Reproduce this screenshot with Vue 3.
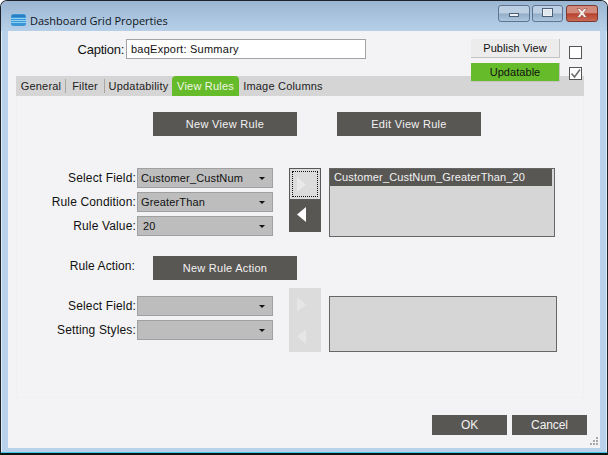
<script setup>
const tabs = [
  { name: "General", width: 48 },
  { name: "Filter", width: 38 },
  { name: "Updatability", width: 67 },
  { name: "View Rules", width: 67, active: true },
  { name: "Image Columns", width: 88 },
];
const ruleFields = [
  { label: "Select Field:", value: "Customer_CustNum" },
  { label: "Rule Condition:", value: "GreaterThan" },
  { label: "Rule Value:", value: "20", indent: true },
];
const actionFields = [
  { label: "Select Field:", value: "" },
  { label: "Setting Styles:", value: "" },
];
</script>

<template>
  <div class="window">
    <div class="titlebar">
      <svg class="app-icon" width="15" height="12" viewBox="0 0 15 12">
        <rect x="0" y="0" width="15" height="12" rx="2.5" fill="#3b96d6" />
        <rect x="1" y="1" width="13" height="2" fill="#2a7fc4" />
        <rect x="0" y="4" width="15" height="1" fill="#8fd2f3" />
        <rect x="0" y="6" width="15" height="1" fill="#8fd2f3" />
        <rect x="0" y="8" width="15" height="1" fill="#8fd2f3" />
      </svg>
      <span class="title">Dashboard Grid Properties</span>
      <div class="win-buttons">
        <div class="win-btn"><span class="min-glyph"></span></div>
        <div class="win-btn narrow"><span class="max-glyph"></span></div>
        <div class="win-btn close">
          <svg width="14" height="10" viewBox="0 0 14 10">
            <path d="M2 0.5h3l2 2.5 2-2.5h3L8.8 5 12 9.5H9L7 7 5 9.5H2L5.2 5z" fill="#f4ece8" stroke="#8a4a3c" stroke-width="0.6" />
          </svg>
        </div>
      </div>
    </div>

    <div class="client">
      <div class="header">
        <div class="caption-row">
          <label class="caption-label">Caption:</label>
          <div class="caption-input">baqExport: Summary</div>
        </div>
        <div class="publish">
          <div class="publish-row">
            <div class="publish-btn">Publish View</div>
            <span class="check"></span>
          </div>
          <div class="publish-row">
            <div class="publish-btn green">Updatable</div>
            <span class="check">
              <svg width="13" height="13" viewBox="0 0 13 13">
                <path d="M2.5 6.5l3 3.5 5.5-7.5" fill="none" stroke="#6a6a6a" stroke-width="1.5" />
              </svg>
            </span>
          </div>
        </div>
      </div>

      <div class="tabs">
        <template v-for="(tab, i) in tabs" :key="tab.name">
          <div class="tab" :class="{ active: tab.active }" :style="{ width: tab.width + 'px' }">{{ tab.name }}</div>
          <span v-if="i < 2" class="tab-sep"></span>
        </template>
      </div>

      <div class="panel">
        <div class="top-buttons">
          <div class="dark-btn">New View Rule</div>
          <div class="dark-btn">Edit View Rule</div>
        </div>

        <div class="rule-block">
          <div class="fields">
            <div v-for="f in ruleFields" :key="f.label" class="field">
              <span class="field-label">{{ f.label }}</span>
              <div class="select" :class="{ indent: f.indent }">
                <span>{{ f.value }}</span><i class="caret"></i>
              </div>
            </div>
          </div>
          <div class="arrows">
            <div class="arrow light">
              <span class="focus"></span>
              <svg width="9" height="15" viewBox="0 0 9 15"><path d="M0 0l9 7.5L0 15z" fill="#e9e9e9" /></svg>
            </div>
            <div class="arrow dark">
              <svg width="9" height="15" viewBox="0 0 9 15"><path d="M9 0L0 7.5 9 15z" fill="#fff" /></svg>
            </div>
          </div>
          <div class="list list-top">
            <div class="list-item">Customer_CustNum_GreaterThan_20</div>
          </div>
        </div>

        <div class="action-row">
          <span class="action-label">Rule Action:</span>
          <div class="dark-btn wide-text">New Rule Action</div>
        </div>

        <div class="rule-block second">
          <div class="fields offset">
            <div v-for="f in actionFields" :key="f.label" class="field">
              <span class="field-label">{{ f.label }}</span>
              <div class="select"><span>{{ f.value }}</span><i class="caret"></i></div>
            </div>
          </div>
          <div class="arrows disabled">
            <div class="arrow">
              <svg width="9" height="15" viewBox="0 0 9 15"><path d="M0 0l9 7.5L0 15z" fill="#e6e6e6" /></svg>
            </div>
            <div class="arrow">
              <svg width="9" height="15" viewBox="0 0 9 15"><path d="M9 0L0 7.5 9 15z" fill="#e6e6e6" /></svg>
            </div>
          </div>
          <div class="list list-bottom"></div>
        </div>
      </div>

      <div class="footer">
        <div class="dark-btn small">OK</div>
        <div class="dark-btn small">Cancel</div>
      </div>
      <svg class="grip" width="9" height="9" viewBox="0 0 9 9" fill="#a9a9a9">
        <rect x="6" y="0" width="2" height="2" />
        <rect x="3" y="3" width="2" height="2" />
        <rect x="6" y="3" width="2" height="2" />
        <rect x="0" y="6" width="2" height="2" />
        <rect x="3" y="6" width="2" height="2" />
        <rect x="6" y="6" width="2" height="2" />
      </svg>
    </div>
  </div>
</template>

<style>
html,
body {
  margin: 0;
  background: #fff;
}
</style>

<style scoped>
.window {
  width: 608px;
  height: 455px;
  box-sizing: border-box;
  padding: 0 1px 1px;
  background: #b9d2ec;
  border: 1px solid #1c2228;
  border-bottom: 2px solid #0f1418;
  border-radius: 7px 7px 0 0;
  box-shadow: inset 0 -1px #46c4e4, inset 1px 0 #e2edf7, inset -1px 0 #e2edf7;
  overflow: hidden;
  display: flex;
  flex-direction: column;
  font-family: "Liberation Sans", Arial, sans-serif;
  font-size: 12px;
  color: #111;
}

.titlebar {
  height: 30px;
  margin: 0 -1px;
  padding: 0 9px 0 10px;
  display: flex;
  align-items: center;
  background: linear-gradient(#9bb6d2, #b7d0e9);
  flex-shrink: 0;
}

.app-icon {
  margin-top: 8px;
  margin-right: 4px;
}

.title {
  font-family: "Open Sans", sans-serif;
  font-size: 11px;
  color: #10151a;
  margin-top: 8px;
}

.win-buttons {
  margin-left: auto;
  margin-top: -6px;
  display: flex;
  gap: 2px;
}

.win-btn {
  width: 32px;
  height: 17px;
  box-sizing: border-box;
  border: 1px solid #5d7590;
  border-radius: 3px;
  display: flex;
  align-items: center;
  justify-content: center;
  background: linear-gradient(#bdd0e3 0 48%, #93adc8 52%, #aec6de);
}

.win-btn.narrow {
  width: 31px;
}

.win-btn.close {
  margin-left: 1px;
  border-color: #7a3a30;
  background: linear-gradient(#d28a7c 0 45%, #b8412e 52%, #c96a56);
}

.min-glyph {
  width: 10px;
  height: 4px;
  margin-top: 4px;
  background: #eef2f6;
  border: 1px solid #4d6075;
  box-sizing: border-box;
}

.max-glyph {
  width: 11px;
  height: 9px;
  box-sizing: border-box;
  margin-top: -2px;
  background: #dfe7ef;
  border: 2px solid #eef2f6;
  outline: 1px solid #4d6075;
  outline-offset: -1px;
}

.client {
  position: relative;
  width: 592px;
  height: 417px;
  margin: 0 6px;
  background: #f3f3f5;
  padding: 0 16px 0 8px;
  box-sizing: border-box;
}

.header {
  position: relative;
  z-index: 1;
  height: 45px;
  display: flex;
  justify-content: space-between;
}

.caption-row {
  display: flex;
  align-items: center;
  height: 20px;
  margin-top: 8px;
}

.caption-label {
  width: 108px;
  text-align: right;
  margin-right: 2px;
  font-size: 13px;
  letter-spacing: -0.25px;
}

.caption-input {
  width: 240px;
  height: 20px;
  box-sizing: border-box;
  border: 1px solid #a3a3a3;
  background: #fff;
  padding-left: 4px;
  line-height: 18px;
  font-size: 11px;
  letter-spacing: 0.25px;
}

.publish {
  margin-top: 8px;
  margin-right: 2px;
  display: flex;
  flex-direction: column;
  gap: 4px;
}

.publish-row {
  display: flex;
  align-items: flex-start;
  gap: 9px;
}

.publish-btn {
  width: 89px;
  height: 19px;
  box-sizing: border-box;
  background: #ececec;
  border-right: 1px solid #c4c4c4;
  border-bottom: 1px solid #c4c4c4;
  text-align: center;
  line-height: 18px;
  font-size: 11px;
  letter-spacing: 0.05px;
}

.publish-btn.green {
  background: #66bb2a;
}

.check {
  width: 13px;
  height: 13px;
  margin-top: 7px;
  box-sizing: border-box;
  border: 1px solid #555;
  background: #fff;
  display: block;
  overflow: hidden;
}

.check svg {
  display: block;
  margin: -1px;
}

.publish-row + .publish-row .check {
  margin-top: 4px;
}

.tabs {
  height: 20px;
  background: #d5d5d5;
  display: flex;
  align-items: center;
  padding-left: 1px;
  color: #222;
}

.tab {
  line-height: 20px;
  font-size: 11px;
  letter-spacing: 0.2px;
  text-align: center;
  flex-shrink: 0;
}

.tab.active {
  height: 20px;
  background: #66bb2a;
  color: #f0f7e4;
  border-radius: 4px 4px 0 0;
}

.tab-sep {
  width: 1px;
  height: 14px;
  background: #a8a8a0;
}

.panel {
  height: 302px;
  box-sizing: border-box;
  border: 1px solid #f0f0f0;
  border-top: 0;
  padding-top: 16px;
}

.top-buttons {
  display: flex;
  gap: 40px;
  padding-left: 136px;
}

.dark-btn {
  width: 144px;
  height: 24px;
  background: #595754;
  color: #f2f2f2;
  text-align: center;
  line-height: 24px;
  font-size: 11px;
  letter-spacing: 0.3px;
}

.dark-btn.wide-text {
  letter-spacing: 0.25px;
}

.dark-btn.small {
  width: 75px;
  height: 20px;
  line-height: 20px;
  font-size: 12px;
  letter-spacing: -0.1px;
}

.rule-block {
  display: flex;
  margin-top: 32px;
}

.rule-block.second {
  margin-top: 8px;
}

.fields {
  width: 256px;
  display: flex;
  flex-direction: column;
  gap: 4px;
}

.fields.offset {
  padding-top: 8px;
}

.field {
  display: flex;
  align-items: center;
}

.field-label {
  width: 119px;
  margin-right: 1px;
  text-align: right;
  font-size: 12px;
  letter-spacing: 0.15px;
}

.select {
  width: 136px;
  height: 20px;
  box-sizing: border-box;
  border: 1px solid #a0a0a0;
  background: #bdbdbd;
  padding-left: 3px;
  line-height: 18px;
  font-size: 11px;
  letter-spacing: 0.15px;
  display: flex;
  justify-content: space-between;
  align-items: center;
}

.select.indent {
  padding-left: 5px;
}

.caret {
  width: 0;
  height: 0;
  margin-right: 7px;
  border-left: 3px solid transparent;
  border-right: 3px solid transparent;
  border-top: 3px solid #111;
}

.arrows {
  width: 32px;
  margin-left: 16px;
  flex-shrink: 0;
  align-self: flex-start;
}

.arrow {
  position: relative;
  width: 32px;
  height: 32px;
  box-sizing: border-box;
  padding-left: 8px;
  display: flex;
  align-items: center;
}

.arrow svg {
  display: block;
}

.arrow.light {
  padding-left: 7px;
  background: #dcdcdc;
  border: 1px solid #5a5856;
}

.arrow.dark {
  background: #595754;
  padding-bottom: 3px;
}

.arrows.disabled {
  background: #dcdcdc;
}

.focus {
  position: absolute;
  inset: 2px;
  border: 1px dotted #111;
}

.list {
  margin-left: 8px;
  box-sizing: border-box;
  border: 1px solid #666;
  background: #d6d6d6;
}

.list-top {
  width: 226px;
  height: 69px;
  padding-right: 2px;
}

.list-bottom {
  width: 228px;
  height: 56px;
  margin-top: 8px;
}

.list-item {
  height: 17px;
  padding-left: 4px;
  background: #595754;
  color: #f2f2f2;
  line-height: 17px;
  font-size: 11px;
  letter-spacing: 0.15px;
}

.action-row {
  display: flex;
  align-items: center;
  margin-top: 19px;
}

.action-label {
  width: 118px;
  margin-right: 18px;
  text-align: right;
  font-size: 12px;
  letter-spacing: 0.1px;
  margin-top: -5px;
}

.footer {
  display: flex;
  justify-content: flex-end;
  gap: 5px;
  margin-right: -3px;
  padding-top: 17px;
}

.grip {
  position: absolute;
  right: 1px;
  bottom: 2px;
}
</style>
